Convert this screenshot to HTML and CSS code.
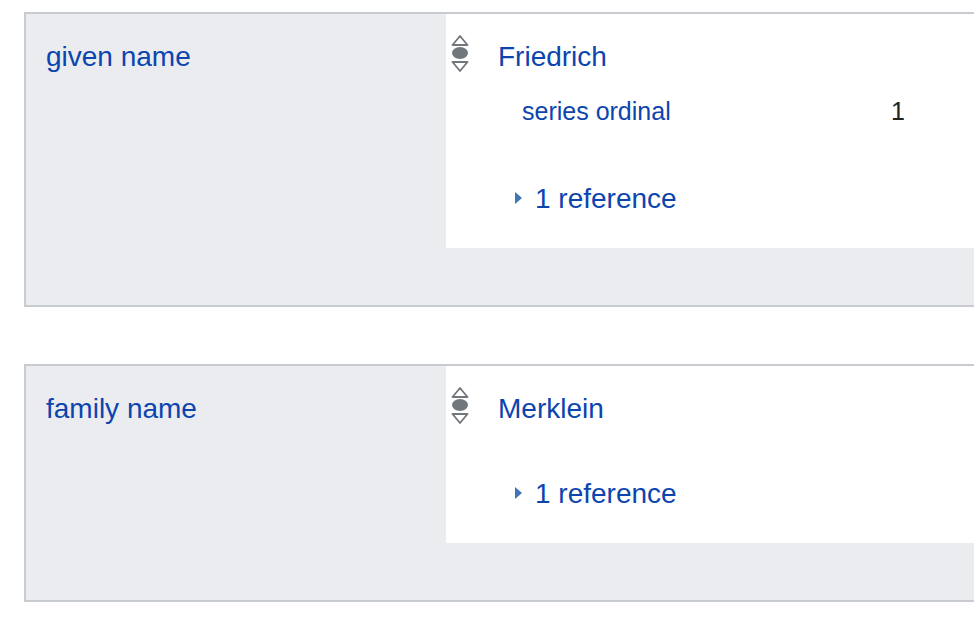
FILE: index.html
```html
<!DOCTYPE html>
<html>
<head>
<meta charset="utf-8">
<link rel="stylesheet" href="styles.css">
</head>
<body>
<div class="page">
  <div class="group">
    <div class="prop"><a class="link">given name</a></div>
    <div class="statements">
      <div class="statement">
        <div class="main">
          <svg class="rank" width="18" height="40" viewBox="0 0 18 40">
            <path d="M1.5 11 L9 2 L16.5 11 Z" fill="none" stroke="#72777d" stroke-width="1.8" stroke-linejoin="round"/>
            <ellipse cx="9" cy="19" rx="8" ry="6" fill="#72777d"/>
            <path d="M1.5 28 L9 37 L16.5 28 Z" fill="none" stroke="#72777d" stroke-width="1.8" stroke-linejoin="round"/>
          </svg>
          <a class="link value">Friedrich</a>
        </div>
        <div class="qualifiers">
          <div class="qual">
            <a class="link qprop">series ordinal</a>
            <span class="qval">1</span>
          </div>
        </div>
        <div class="refs"><span class="tri"></span><a class="link">1 reference</a></div>
      </div>
    </div>
  </div>

  <div class="group">
    <div class="prop"><a class="link">family name</a></div>
    <div class="statements">
      <div class="statement">
        <div class="main">
          <svg class="rank" width="18" height="40" viewBox="0 0 18 40">
            <path d="M1.5 11 L9 2 L16.5 11 Z" fill="none" stroke="#72777d" stroke-width="1.8" stroke-linejoin="round"/>
            <ellipse cx="9" cy="19" rx="8" ry="6" fill="#72777d"/>
            <path d="M1.5 28 L9 37 L16.5 28 Z" fill="none" stroke="#72777d" stroke-width="1.8" stroke-linejoin="round"/>
          </svg>
          <a class="link value">Merklein</a>
        </div>
        <div class="refs"><span class="tri"></span><a class="link">1 reference</a></div>
      </div>
    </div>
  </div>
</div>
</body>
</html>
```

FILE: styles.css
```css
html, body {
  margin: 0;
  padding: 0;
  background: #ffffff;
  overflow: hidden;
}
body {
  font-family: "Liberation Sans", Arial, sans-serif;
  color: #202122;
}
.page {
  padding: 12px 0 0 24px;
  display: flex;
  flex-direction: column;
  gap: 57px;
}
.link {
  color: #0b45ad;
  text-decoration: none;
}
.group {
  display: flex;
  border: 2px solid #c8ccd1;
  border-right: none;
  background: #eaecf0;
  padding-bottom: 57px;
}
.prop {
  width: 400px;
  flex: none;
  padding: 26px 0 0 20px;
  font-size: 28px;
  line-height: 34px;
}
.statements {
  flex: 1;
  background: #ffffff;
}
.statement {
  padding: 0 0 33px 0;
}
.main {
  display: flex;
  align-items: flex-start;
  padding-top: 26px;
  font-size: 28px;
  line-height: 34px;
  height: 34px;
}
.rank {
  margin: -6px 0 0 5px;
  flex: none;
}
.value {
  margin-left: 29px;
}
.qualifiers {
  margin-top: 22px;
  padding-bottom: 5px;
}
.qual {
  display: flex;
  font-size: 25px;
  line-height: 30px;
  padding-left: 76px;
}
.qprop {
  width: 369px;
  flex: none;
}
.qval {
  color: #202122;
}
.refs {
  display: flex;
  align-items: center;
  margin-top: 51px;
  padding-left: 69px;
  font-size: 28px;
  line-height: 34px;
}
.tri {
  width: 0;
  height: 0;
  border-top: 6px solid transparent;
  border-bottom: 6px solid transparent;
  border-left: 7px solid #3f74b5;
  margin-right: 13px;
  margin-top: -2px;
}
.statement .refs {
  margin-bottom: -1px;
}
```
